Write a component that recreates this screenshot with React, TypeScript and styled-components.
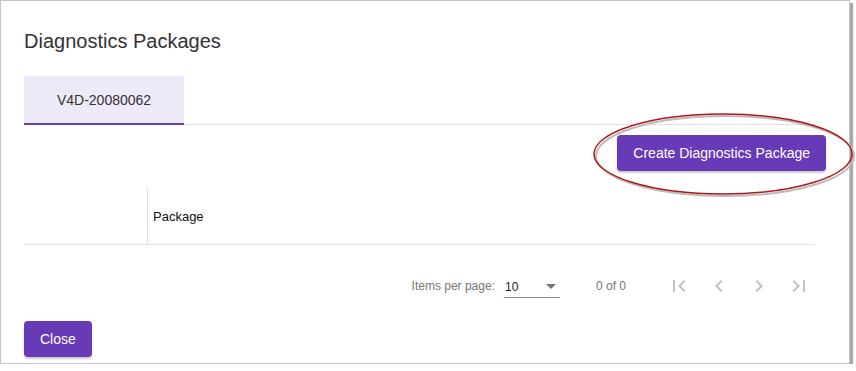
import styled, { createGlobalStyle } from 'styled-components';

const GlobalStyle = createGlobalStyle`
  html, body {
    margin: 0;
    padding: 0;
    background: #fff;
  }
  body {
    font-family: 'Liberation Sans', Arial, sans-serif;
  }
`;

const Frame = styled.div`
  position: relative;
  box-sizing: border-box;
  width: 850px;
  height: 364px;
  border: 1px solid #c4c4c4;
  background: #fff;
  box-shadow: 3px 3px 1px #a9a9a9;
  padding: 23px 34px 0 23px;
  display: flex;
  flex-direction: column;
`;

const Title = styled.h2`
  margin: 0;
  font-size: 20px;
  font-weight: 400;
  color: #333;
  line-height: 34px;
`;

const TabBar = styled.div`
  margin-top: 18px;
  display: flex;
  border-bottom: 1px solid #e0e0e0;
`;

const Tab = styled.div<{ active?: boolean }>`
  width: 160px;
  height: 49px;
  box-sizing: border-box;
  display: flex;
  align-items: center;
  justify-content: center;
  font-size: 14px;
  color: #333;
  background: ${(p) => (p.active ? '#ede9f6' : 'transparent')};
  border-bottom: 2px solid ${(p) => (p.active ? '#673ab7' : 'transparent')};
  margin-bottom: -1px;
`;

const Toolbar = styled.div`
  display: flex;
  justify-content: flex-end;
  padding-top: 10px;
  margin-right: -11px;
`;

const Button = styled.button`
  height: 36px;
  padding: 0 16px;
  border: none;
  border-radius: 4px;
  background: #673ab7;
  color: #fff;
  font-family: 'Liberation Sans', Arial, sans-serif;
  font-size: 14px;
  box-shadow: 0 2px 2px rgba(0, 0, 0, 0.2);
  cursor: pointer;
`;

const TableHead = styled.div`
  margin-top: 17px;
  display: grid;
  grid-template-columns: 124px 1fr;
  height: 56px;
  border-bottom: 1px solid #e0e0e0;
`;

const HeadCell = styled.div<{ divider?: boolean }>`
  display: flex;
  align-items: center;
  padding-left: 5px;
  font-size: 13px;
  color: #111;
  border-right: ${(p) => (p.divider ? '1px solid #e0e0e0' : 'none')};
`;

const Paginator = styled.div`
  margin-top: 13px;
  height: 56px;
  display: flex;
  align-items: center;
  justify-content: flex-end;
  font-size: 12px;
  color: #757575;
  margin-right: -4px;
`;

const Label = styled.span`
  margin-right: 9px;
`;

const Select = styled.div`
  width: 56px;
  height: 22px;
  box-sizing: border-box;
  border-bottom: 1px solid #8a8a8a;
  display: flex;
  align-items: center;
  justify-content: space-between;
  color: #222;
  padding: 0 4px 0 1px;
  margin-top: 2px;
`;

const Caret = styled.span`
  width: 0;
  height: 0;
  border-left: 5px solid transparent;
  border-right: 5px solid transparent;
  border-top: 5px solid #757575;
`;

const Range = styled.span`
  margin: 0 33px 0 36px;
`;

const NavButton = styled.button`
  width: 40px;
  height: 40px;
  border: none;
  background: transparent;
  display: flex;
  align-items: center;
  justify-content: center;
  padding: 0;
`;

const Footer = styled.div`
  padding-top: 7px;
`;

const Annotation = styled.svg`
  position: absolute;
  left: 588px;
  top: 105px;
  overflow: visible;
`;

function NavIcon({ d }: { d: string }) {
  return (
    <NavButton>
      <svg width="24" height="24" viewBox="0 0 24 24">
        <path d={d} fill="#c2c2c2" />
      </svg>
    </NavButton>
  );
}

export default function App() {
  return (
    <>
      <GlobalStyle />
      <Frame>
        <Title>Diagnostics Packages</Title>
        <TabBar>
          <Tab active>V4D-20080062</Tab>
        </TabBar>
        <Toolbar>
          <Button>Create Diagnostics Package</Button>
        </Toolbar>
        <TableHead>
          <HeadCell divider />
          <HeadCell>Package</HeadCell>
        </TableHead>
        <Paginator>
          <Label>Items per page:</Label>
          <Select>
            <span>10</span>
            <Caret />
          </Select>
          <Range>0 of 0</Range>
          <NavIcon d="M18.41 16.59L13.82 12l4.59-4.59L17 6l-6 6 6 6zM6 6h2v12H6z" />
          <NavIcon d="M15.41 7.41L14 6l-6 6 6 6 1.41-1.41L10.83 12z" />
          <NavIcon d="M10 6L8.59 7.41 13.17 12l-4.58 4.59L10 18l6-6z" />
          <NavIcon d="M5.59 7.41L10.18 12l-4.59 4.59L7 18l6-6-6-6zM16 6h2v12h-2z" />
        </Paginator>
        <Footer>
          <Button>Close</Button>
        </Footer>
        <Annotation width="270" height="95" viewBox="0 0 270 95">
          <ellipse cx="136" cy="50" rx="129" ry="40" fill="none" stroke="#bbb" strokeWidth="2" />
          <ellipse cx="134" cy="48" rx="129" ry="40" fill="none" stroke="#b01818" strokeWidth="1.5" />
        </Annotation>
      </Frame>
    </>
  );
}
